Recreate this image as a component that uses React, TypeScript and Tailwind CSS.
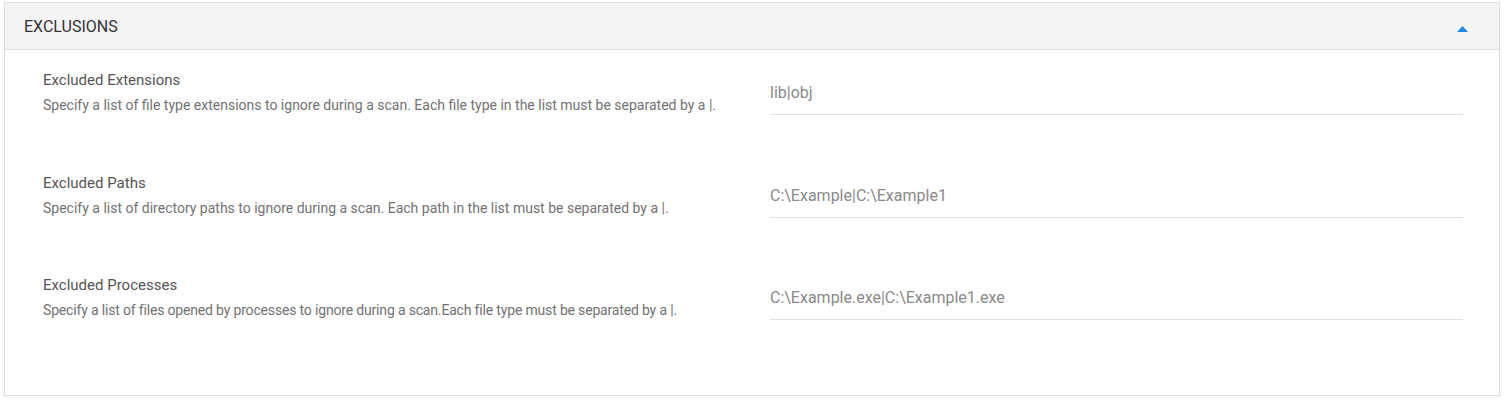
const rows = [
  {
    label: "Excluded Extensions",
    desc: "Specify a list of file type extensions to ignore during a scan. Each file type in the list must be separated by a |.",
    value: "lib|obj",
    tight: false,
  },
  {
    label: "Excluded Paths",
    desc: "Specify a list of directory paths to ignore during a scan. Each path in the list must be separated by a |.",
    value: "C:\\Example|C:\\Example1",
    tight: false,
  },
  {
    label: "Excluded Processes",
    desc: "Specify a list of files opened by processes to ignore during a scan.Each file type must be separated by a |.",
    value: "C:\\Example.exe|C:\\Example1.exe",
    tight: true,
  },
];

export default function App() {
  return (
    <div className="h-[400px] w-[1505px] bg-white pl-[4px] pr-[5px] pt-[2px] font-['Roboto',sans-serif]">
      <div className="h-[394px] border border-[#dedede] bg-white shadow-[0_1px_2px_rgba(0,0,0,0.06)]">
        <div className="flex h-[47px] items-center justify-between border-b border-[#dedede] bg-[#f4f4f4] pl-[19px] pr-[31px] pt-[2px]">
          <span className="text-[16px] text-[#333]">EXCLUSIONS</span>
          <svg width="11" height="6" viewBox="0 0 11 6" className="mt-[4px]">
            <path d="M0 6 L5.5 0 L11 6 Z" fill="#1e88e5" />
          </svg>
        </div>
        <div className="pl-[38px] pr-[36px]">
          {rows.map((r) => (
            <div key={r.label} className="grid h-[102.5px] grid-cols-[727px_1fr] pt-[20px]">
              <div>
                <div className="text-[15px] leading-5 text-[#555]">{r.label}</div>
                <div
                  className={
                    r.tight
                      ? "mt-[6px] text-[14px] leading-[18px] tracking-[-0.17px] text-[#727272]"
                      : "mt-[6px] text-[14px] leading-[18px] text-[#727272]"
                  }
                >
                  {r.desc}
                </div>
              </div>
              <div className="mt-[11px] h-[34px] border-b border-[#e0e0e0] text-[16px] leading-6 text-[#8a8a8a]">
                {r.value}
              </div>
            </div>
          ))}
        </div>
      </div>
    </div>
  );
}
